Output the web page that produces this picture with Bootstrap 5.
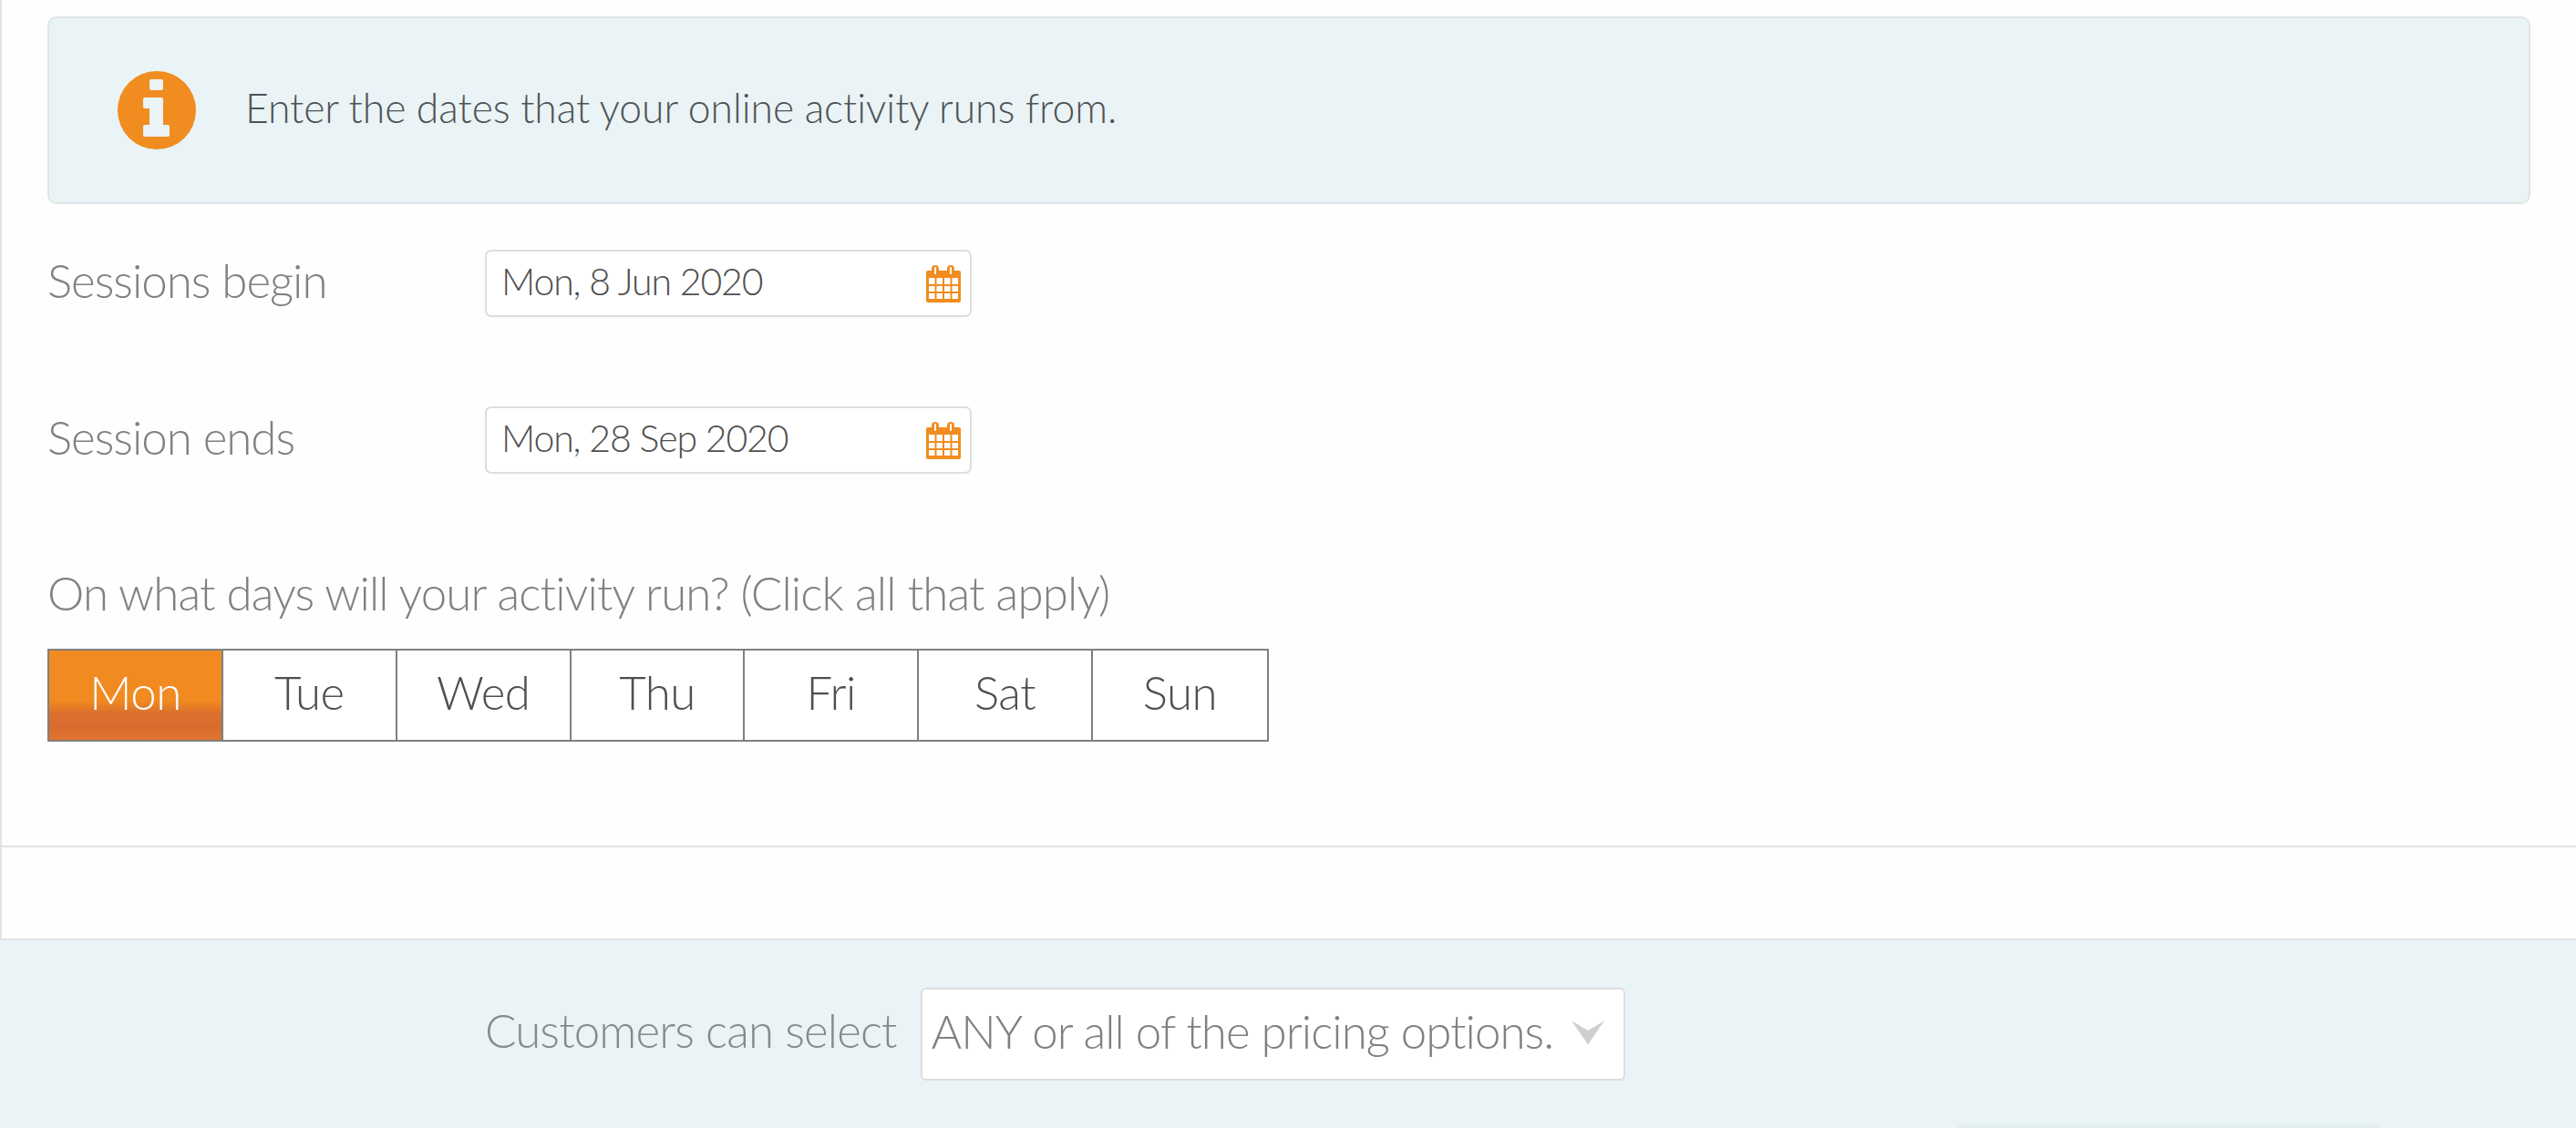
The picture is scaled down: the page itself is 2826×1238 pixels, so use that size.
<!DOCTYPE html>
<html lang="en">
<head>
<meta charset="utf-8">
<title>Online activity dates</title>
<link href="https://cdn.jsdelivr.net/npm/bootstrap@5.3.0/dist/css/bootstrap.min.css" rel="stylesheet">
<style>
html, body { height: 1238px; overflow: hidden; }
body { font-family: Lato, "Liberation Sans", sans-serif; font-weight: 300; background: #fefefe; color: #555; }
.page-wrap { height: 1238px; display: flex; flex-direction: column; border-left: 2px solid #e3e3e3; }
.form-area { padding: 18px 50px 0 50px; height: 930px; border-bottom: 2px solid #e3e3e3; flex: none; }
.intro-box { height: 206px; background: #eaf3f5; border: 2px solid #e1e5e6; border-radius: 10px; padding-left: 75px; gap: 54px; font-size: 44.500px; letter-spacing: -.06px; word-spacing: -.5px; color: #4f5355; margin-bottom: 50px; }
.intro-text { padding-bottom: 6px; }
.info-icon { width: 86px; height: 86px; flex: none; }
.date-row { height: 74px; margin-bottom: 98px; }
.date-row.last-date { margin-bottom: 101px; }
.date-label { width: 480px; font-size: 51px; letter-spacing: -1px; color: #808080; flex: none; padding-bottom: 5px; }
.date-field { width: 534px; height: 74px; background: #fff; border: 2px solid #dedede; border-radius: 7px; padding: 0 10px 0 16px; font-size: 41px; letter-spacing: -1.15px; color: #4f4f4f; }
.date-value { padding-bottom: 5px; }
.cal-icon { width: 38px; height: 41px; flex: none; }
.days-q { font-size: 51px; letter-spacing: -.85px; color: #808080; line-height: 60px; margin-bottom: 31px; }
.day-strip { width: 1340px; height: 102px; border: 2px solid #808080; }
.day-cell { flex: 0 0 190.800px; font-size: 51px; letter-spacing: -.5px; color: #4f4f4f; border-left: 2px solid #808080; background: #fff; padding-bottom: 5px; }
.day-cell:first-child { border-left: 0; flex-basis: 189px; }
.day-cell:last-child { flex: 1 1 0; }
.day-cell.is-on { color: #fff; background: linear-gradient(#f18a20 0%, #f18a20 56%, #db702d 70%, #d66b2e 86%, #e1742f 100%); }
.gap-band { height: 100px; flex: none; }
.price-band { flex: 1 1 auto; margin-left: -2px; background: #eaf3f5; border-top: 2px solid #e3e3e3; padding: 52px 0 0 532px; gap: 26px; align-items: flex-start; position: relative; }
.price-label { font-size: 51px; letter-spacing: -.85px; color: #868a8b; line-height: 94px; height: 100px; white-space: nowrap; }
.price-select { width: 773px; height: 102px; background: #fff; border: 2px solid #dedede; border-radius: 6px; padding-left: 10px; font-size: 51px; letter-spacing: -.95px; color: #808080; white-space: nowrap; }
.select-value { padding-bottom: 6px; }
.sel-arrow { width: 36px; height: 28px; margin-left: 20px; flex: none; margin-bottom: 4px; }
.btn-glow { position: absolute; left: 2148px; bottom: 0; width: 462px; height: 6px; background: linear-gradient(#eaf3f5, #e1eeee); }
</style>
</head>
<body>
<div class="page-wrap">
  <div class="form-area">
    <div class="intro-box d-flex align-items-center">
      <svg class="info-icon" viewBox="0 0 86 86" aria-hidden="true"><circle cx="43" cy="43" r="43" fill="#f18c20"/><path fill="#eaf3f5" d="M37 9h11a2 2 0 0 1 2 2v8a2 2 0 0 1-2 2H37a2 2 0 0 1-2-2v-8a2 2 0 0 1 2-2zM30 29h18a2 2 0 0 1 2 2v28h5a2 2 0 0 1 2 2v9a2 2 0 0 1-2 2H30a2 2 0 0 1-2-2v-9a2 2 0 0 1 2-2h5V41h-5a2 2 0 0 1-2-2v-8a2 2 0 0 1 2-2z"/></svg>
      <div class="intro-text">Enter the dates that your online activity runs from.</div>
    </div>
    <div class="date-row d-flex align-items-center">
      <div class="date-label">Sessions begin</div>
      <div class="date-field d-flex align-items-center justify-content-between"><span class="date-value">Mon, 8 Jun 2020</span>
        <svg class="cal-icon" viewBox="0 0 38 41" aria-hidden="true"><path fill="#f18c20" fill-rule="evenodd" d="M2 6h4V4a4 4 0 0 1 8 0v2h9V4a4 4 0 0 1 8 0v2h5a2 2 0 0 1 2 2v31a2 2 0 0 1-2 2H2a2 2 0 0 1-2-2V8a2 2 0 0 1 2-2zM9 3v6a1 1 0 0 0 2 0V3a1 1 0 0 0-2 0zM26 3v6a1 1 0 0 0 2 0V3a1 1 0 0 0-2 0zM3 14v7h6.500v-7zM11.500 14v7H18v-7zM20 14v7h6.500v-7zM28.500 14v7H35v-7zM3 23v6h6.500v-6zM11.500 23v6H18v-6zM20 23v6h6.500v-6zM28.500 23v6H35v-6zM3 31v6h6.500v-6zM11.500 31v6H18v-6zM20 31v6h6.500v-6zM28.500 31v6H35v-6z"/></svg>
      </div>
    </div>
    <div class="date-row last-date d-flex align-items-center">
      <div class="date-label">Session ends</div>
      <div class="date-field d-flex align-items-center justify-content-between"><span class="date-value">Mon, 28 Sep 2020</span>
        <svg class="cal-icon" viewBox="0 0 38 41" aria-hidden="true"><path fill="#f18c20" fill-rule="evenodd" d="M2 6h4V4a4 4 0 0 1 8 0v2h9V4a4 4 0 0 1 8 0v2h5a2 2 0 0 1 2 2v31a2 2 0 0 1-2 2H2a2 2 0 0 1-2-2V8a2 2 0 0 1 2-2zM9 3v6a1 1 0 0 0 2 0V3a1 1 0 0 0-2 0zM26 3v6a1 1 0 0 0 2 0V3a1 1 0 0 0-2 0zM3 14v7h6.500v-7zM11.500 14v7H18v-7zM20 14v7h6.500v-7zM28.500 14v7H35v-7zM3 23v6h6.500v-6zM11.500 23v6H18v-6zM20 23v6h6.500v-6zM28.500 23v6H35v-6zM3 31v6h6.500v-6zM11.500 31v6H18v-6zM20 31v6h6.500v-6zM28.500 31v6H35v-6z"/></svg>
      </div>
    </div>
    <div class="days-q">On what days will your activity run? (Click all that apply)</div>
    <div class="day-strip d-flex">
      <div class="day-cell is-on d-flex align-items-center justify-content-center">Mon</div>
      <div class="day-cell d-flex align-items-center justify-content-center">Tue</div>
      <div class="day-cell d-flex align-items-center justify-content-center">Wed</div>
      <div class="day-cell d-flex align-items-center justify-content-center">Thu</div>
      <div class="day-cell d-flex align-items-center justify-content-center">Fri</div>
      <div class="day-cell d-flex align-items-center justify-content-center">Sat</div>
      <div class="day-cell d-flex align-items-center justify-content-center">Sun</div>
    </div>
  </div>
  <div class="gap-band"></div>
  <div class="price-band d-flex">
    <div class="price-label">Customers can select</div>
    <div class="price-select d-flex align-items-center"><span class="select-value">ANY or all of the pricing options.</span>
      <svg class="sel-arrow" viewBox="0 0 37 28" aria-hidden="true"><path fill="#cfcfcf" d="M0 1l18.500 11L37 1 18.500 28z"/></svg>
    </div>
    <div class="btn-glow"></div>
  </div>
</div>
<script src="https://cdn.jsdelivr.net/npm/bootstrap@5.3.0/dist/js/bootstrap.bundle.min.js"></script>
</body>
</html>
